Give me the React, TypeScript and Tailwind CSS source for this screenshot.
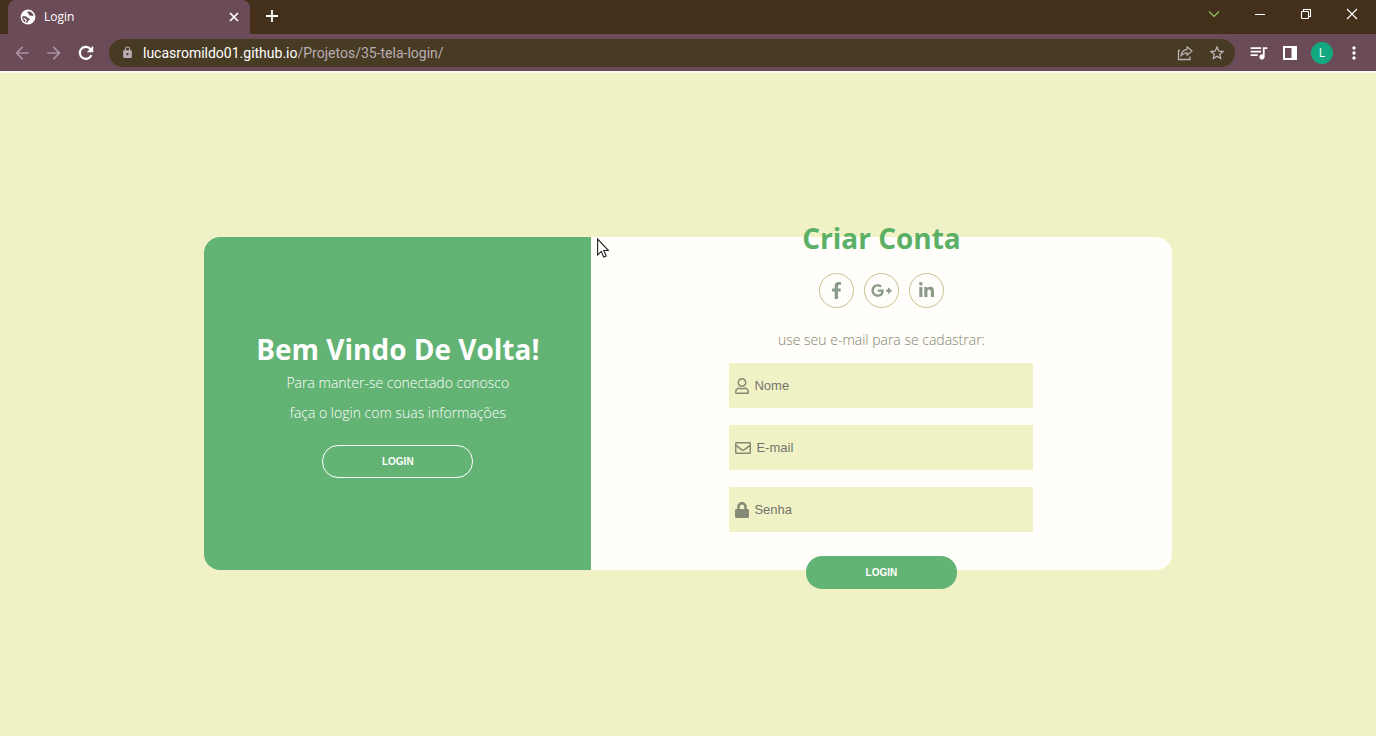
import type { ReactNode } from "react";
import {
  FaFacebookF,
  FaGooglePlusG,
  FaLinkedinIn,
  FaLock,
  FaRegEnvelope,
  FaRegUser,
} from "react-icons/fa";
import {
  MdArrowBack,
  MdArrowForward,
  MdLock,
  MdMoreVert,
  MdQueueMusic,
  MdStarBorder,
} from "react-icons/md";

function IconButton({ label, children, className = "" }: { label: string; children: ReactNode; className?: string }) {
  return (
    <button type="button" aria-label={label} className={`flex h-8 w-8 shrink-0 items-center justify-center ${className}`}>
      {children}
    </button>
  );
}

function BrowserBar() {
  return (
    <header className="shrink-0 bg-[#44301a] font-['Open_Sans','Noto_Sans',sans-serif] text-white">
      <div className="flex h-[34px] items-stretch pl-2">
        <div className="flex w-[242px] items-center rounded-t-lg bg-[#6b4b57] pr-2 pl-3">
          <svg viewBox="0 0 16 16" className="h-4 w-4" aria-hidden="true">
            <circle cx="8" cy="8" r="7.4" fill="#fff" />
            <path d="M8.600 2.200C7 3 7.200 4.200 8.200 4.600C9.200 5 8.600 6.200 9.600 6.600C10.800 7 11.800 6.200 13.600 7C13.300 4.700 11.400 2.500 8.600 2.200Z" fill="#6b4b57" />
            <path d="M2.200 7.400C4 7.200 6.400 7 7.200 8.400C7.800 9.400 9.600 8.800 9.800 10.200C9.900 11.200 8.400 11.300 8.200 12.200C8 13 7.600 13.400 7 13.800C4 13.300 2.100 10.800 2.200 7.400Z" fill="#6b4b57" />
            <path d="M3.600 9.600C4.800 9.400 5.200 10.200 6 11C6.400 11.500 6 12.200 5.600 12.800" stroke="#fff" strokeWidth="1.200" fill="none" />
          </svg>
          <span className="ml-2 flex-1 text-xs">Login</span>
          <button type="button" aria-label="Fechar guia" className="flex h-4 w-4 items-center justify-center">
            <svg viewBox="0 0 10 10" className="h-[10px] w-[10px]" fill="none" stroke="currentColor" strokeWidth="1.7">
              <path d="M1 1L9 9M9 1L1 9" />
            </svg>
          </button>
        </div>
        <IconButton label="Nova guia" className="ml-[6px]">
          <svg viewBox="0 0 12 12" className="h-3 w-3" fill="none" stroke="currentColor" strokeWidth="1.8">
            <path d="M6 0V12M0 6H12" />
          </svg>
        </IconButton>
        <div className="flex-1" />
        <div className="flex h-7 items-center gap-[14px] pr-2">
          <IconButton label="Pesquisar guias">
            <svg viewBox="0 0 12 12" className="h-3 w-3" fill="none" stroke="#99cc66" strokeWidth="1.1">
              <path d="M1 3.500L6 8.500L11 3.500" />
            </svg>
          </IconButton>
          <IconButton label="Minimizar">
            <svg viewBox="0 0 12 12" className="h-3 w-3" fill="none" stroke="currentColor" strokeWidth="1">
              <path d="M1 6.500H11" />
            </svg>
          </IconButton>
          <IconButton label="Restaurar">
            <svg viewBox="0 0 12 12" className="h-3 w-3" fill="none" stroke="currentColor" strokeWidth="1.1">
              <rect x="1.500" y="3.500" width="7" height="7" rx="0.800" />
              <path d="M3.500 3.500V1.500H10.500V8.500H8.500" />
            </svg>
          </IconButton>
          <IconButton label="Fechar">
            <svg viewBox="0 0 12 12" className="h-3 w-3" fill="none" stroke="currentColor" strokeWidth="1.1">
              <path d="M1 1L11 11M11 1L1 11" />
            </svg>
          </IconButton>
        </div>
      </div>

      <div className="flex h-[37px] items-center bg-[#6b4b57] px-[6px]">
        <IconButton label="Voltar">
          <MdArrowBack className="text-[#a894a0]" size={20} />
        </IconButton>
        <IconButton label="Avançar">
          <MdArrowForward className="text-[#a894a0]" size={20} />
        </IconButton>
        <IconButton label="Recarregar">
          <svg viewBox="0 0 16 16" className="h-4 w-4" aria-hidden="true">
            <path d="M13.400 10.200A6 6 0 1 1 12.600 4.200" fill="none" stroke="currentColor" strokeWidth="2.200" />
            <path d="M15.200 0.800V7.200H8.800Z" fill="currentColor" />
          </svg>
        </IconButton>
        <div className="ml-[7px] flex h-7 min-w-0 flex-1 items-center rounded-full bg-[#483b24] pr-[2px] pl-3">
          <MdLock size={13} className="shrink-0 text-[#b9aeb4]" />
          <div className="ml-[9px] min-w-0 flex-1 truncate font-['Roboto','Noto_Sans',sans-serif] text-sm">
            lucasromildo01.github.io<span className="text-[#b9aeb4]">/Projetos/35-tela-login/</span>
          </div>
          <IconButton label="Compartilhar">
            <svg viewBox="0 0 16 16" className="h-4 w-4 text-[#b9aeb4]" fill="none" stroke="currentColor" strokeWidth="1.300">
              <path d="M3 5.500H1.500V14.500H13V11.500" />
              <path d="M10 1.800L15 6L10 10.200V7.800C7 7.800 5.400 8.800 4 11C4.300 7.500 6.300 4.900 10 4.300Z" strokeLinejoin="round" />
            </svg>
          </IconButton>
          <IconButton label="Adicionar aos favoritos">
            <MdStarBorder size={18} className="text-[#c4bac0]" />
          </IconButton>
        </div>
        <IconButton label="Controlar mídia" className="ml-[7px]">
          <MdQueueMusic size={21} />
        </IconButton>
        <IconButton label="Painel lateral">
          <svg viewBox="0 0 16 16" className="h-4 w-4" aria-hidden="true">
            <path d="M1 1H15V15H1ZM3 3V13H9.500V3Z" fill="currentColor" fillRule="evenodd" />
          </svg>
        </IconButton>
        <IconButton label="Perfil">
          <span className="flex h-[22px] w-[22px] items-center justify-center rounded-full bg-[#14a880] text-xs">L</span>
        </IconButton>
        <IconButton label="Mais opções">
          <MdMoreVert size={20} />
        </IconButton>
      </div>
    </header>
  );
}

function Field({ id, label, type, icon }: { id: string; label: string; type: string; icon: ReactNode }) {
  return (
    <div className="flex h-[45px] items-center bg-[#f0f2c6] px-[6px] pt-px">
      <label htmlFor={id} aria-label={label} className="shrink-0 text-[#848a74]">
        {icon}
      </label>
      <input
        id={id}
        type={type}
        placeholder={label}
        className="ml-[5px] min-w-0 flex-1 bg-transparent font-['Liberation_Sans',Arial,sans-serif] text-[13px] outline-none placeholder:text-[#74746c]"
      />
    </div>
  );
}

function Social({ label, children }: { label: string; children: ReactNode }) {
  return (
    <a href="#" aria-label={label} className="flex h-[35px] w-[35px] items-center justify-center rounded-full border border-[#c3c28c] text-[#8c9a88]">
      {children}
    </a>
  );
}

const buttonShape = "h-[33px] w-[151px] rounded-[16px] font-['Liberation_Sans',Arial,sans-serif] text-[10px] font-bold text-white";

export default function App() {
  return (
    <div className="flex min-h-screen flex-col bg-[#f0f2c6]">
      <BrowserBar />
      <main className="flex flex-1 items-center justify-center font-['Open_Sans','Noto_Sans',sans-serif] shadow-[inset_0_2px_0_#fafaf4]">
        <div className="relative flex h-[calc(50vh-35px)] w-[70.3%] rounded-2xl bg-[#fffefa]">
          <section className="flex w-2/5 flex-col items-center justify-center rounded-l-2xl bg-[#63b374] text-center text-white">
            <h2 className="text-[28px] leading-[38px] font-bold">Bem Vindo De Volta!</h2>
            <p className="text-sm leading-[30px] font-light">Para manter-se conectado conosco</p>
            <p className="text-sm leading-[30px] font-light">faça o login com suas informações</p>
            <button type="button" className={`${buttonShape} mt-[17px] shrink-0 border border-white`}>
              LOGIN
            </button>
          </section>

          <section className="flex w-3/5 flex-col items-center justify-center">
            <h2 className="shrink-0 text-[28px] leading-[38px] font-bold text-[#5cb066]">Criar Conta</h2>
            <div className="mt-4 flex shrink-0 gap-[10px]">
              <Social label="Facebook">
                <FaFacebookF size={17} />
              </Social>
              <Social label="Google Plus">
                <FaGooglePlusG size={21} />
              </Social>
              <Social label="LinkedIn">
                <FaLinkedinIn size={17} />
              </Social>
            </div>
            <p className="mt-5 shrink-0 text-sm leading-6 font-light text-[#84846a]">use seu e-mail para se cadastrar:</p>
            <form className="mt-[11px] flex shrink-0 flex-col items-center" onSubmit={(e) => e.preventDefault()}>
              <div className="flex w-[304px] flex-col gap-[17px]">
                <Field id="nome" label="Nome" type="text" icon={<FaRegUser className="h-4 w-[14px]" />} />
                <Field id="email" label="E-mail" type="email" icon={<FaRegEnvelope className="h-4 w-4" />} />
                <Field id="senha" label="Senha" type="password" icon={<FaLock className="h-4 w-[14px]" />} />
              </div>
              <button type="submit" className={`${buttonShape} mt-6 bg-[#63b374]`}>
                LOGIN
              </button>
            </form>
          </section>

          <svg viewBox="0 0 12 20" className="absolute top-px left-[calc(40%+6px)] h-5 w-3" aria-hidden="true">
            <path d="M0.600 1V17L4.300 13.400L6.700 19L9.200 18L6.800 12.500H11.500Z" fill="#fff" stroke="#222" strokeWidth="1.100" />
          </svg>
        </div>
      </main>
    </div>
  );
}
